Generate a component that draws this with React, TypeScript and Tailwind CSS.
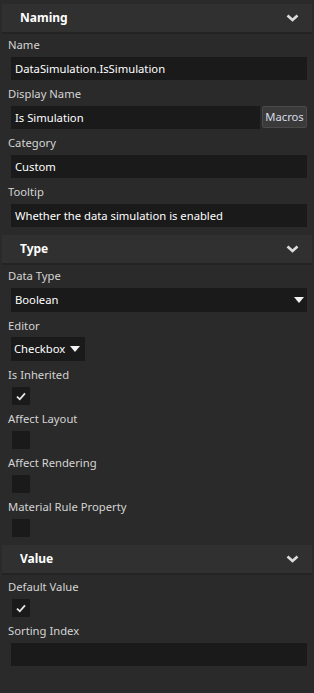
import type { ReactNode } from "react";

const font = { fontFamily: '"Noto Sans", "Open Sans", sans-serif' };

function Chevron() {
  return (
    <svg width="13" height="8" viewBox="0 0 13 8" className="text-[#dcdcdc]">
      <path d="M1.5 1.5 L6.5 6 L11.5 1.5" fill="none" stroke="currentColor" strokeWidth="2.6" />
    </svg>
  );
}

function Caret({ size = 10 }: { size?: number }) {
  return (
    <svg width={size} height={size * 0.6} viewBox="0 0 10 6">
      <path d="M0 0 H10 L5 6 Z" fill="#f2f2f2" />
    </svg>
  );
}

function Check() {
  return (
    <svg width="10" height="9" viewBox="0 0 10 9">
      <path d="M1 4.6 L3.8 7.3 L9 1.4" fill="none" stroke="#e8e8e8" strokeWidth="1.8" />
    </svg>
  );
}

function Header({ title, first }: { title: string; first?: boolean }) {
  return (
    <div
      className={`mx-[2px] h-[30px] flex items-center justify-between pl-[18px] pr-[13px] bg-[#303030] border-b-2 border-[#232323] ${
        first ? "mt-[4px]" : "mt-[8px]"
      }`}
    >
      <span className="text-[12px] font-bold text-white">{title}</span>
      <Chevron />
    </div>
  );
}

function Label({ text, mt = "mt-[4px]" }: { text: string; mt?: string }) {
  return (
    <div className={`px-[8px] h-[20px] leading-[20px] text-[11.25px] text-[#d4d4d4] ${mt}`}>
      {text}
    </div>
  );
}

function Input({ value, children }: { value: string; children?: ReactNode }) {
  return (
    <div className="mt-[2px] ml-[11px] mr-[7px] flex gap-[2px]">
      <div className="flex-1 h-[23px] bg-[#1a1a1a] px-[4px] text-[11.25px] leading-[23px] text-white">{value}</div>
      {children}
    </div>
  );
}

function CheckField({ label, checked, mt }: { label: string; checked?: boolean; mt?: string }) {
  return (
    <>
      <Label text={label} mt={mt} />
      <div className="mt-[2px] ml-[12px] w-[18px] h-[18px] bg-[#1a1a1a] flex items-center justify-center">
        {checked && <Check />}
      </div>
    </>
  );
}

export default function App() {
  return (
    <div className="w-[314px] h-[693px] bg-[#2a2a2a] overflow-hidden" style={font}>
      <Header title="Naming" first />
      <Label text="Name" mt="mt-[1px]" />
      <Input value="DataSimulation.IsSimulation" />
      <Label text="Display Name" />
      <Input value="Is Simulation">
        <div className="w-[45px] h-[22px] bg-[#3a3a3a] border border-[#4a4a4a] rounded-[2px] text-[11.25px] leading-[20px] text-[#d8dce6] text-center">
          Macros
        </div>
      </Input>
      <Label text="Category" />
      <Input value="Custom" />
      <Label text="Tooltip" />
      <Input value="Whether the data simulation is enabled" />

      <Header title="Type" />
      <Label text="Data Type" mt="mt-[1px]" />
      <div className="mt-[2px] ml-[11px] mr-[7px] h-[24px] bg-[#1a1a1a] px-[4px] pr-[3px] flex items-center justify-between">
        <span className="text-[11.25px] text-white">Boolean</span>
        <Caret size={10} />
      </div>
      <Label text="Editor" />
      <div className="mt-[1px] ml-[11px] w-[74px] h-[24px] bg-[#1a1a1a] px-[3px] flex items-center gap-[5px]">
        <span className="text-[11.25px] text-white">Checkbox</span>
        <Caret size={10} />
      </div>
      <CheckField label="Is Inherited" checked />
      <CheckField label="Affect Layout" />
      <CheckField label="Affect Rendering" />
      <CheckField label="Material Rule Property" />

      <Header title="Value" />
      <CheckField label="Default Value" checked mt="mt-[2px]" />
      <Label text="Sorting Index" />
      <Input value="" />
    </div>
  );
}
